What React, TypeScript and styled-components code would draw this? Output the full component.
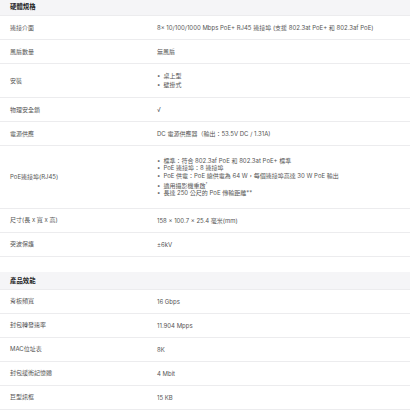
import styled, { createGlobalStyle } from 'styled-components'

const GlobalStyle = createGlobalStyle`
  body {
    margin: 0;
    background: #fff;
    font-family: Inter, "Noto Sans CJK TC", sans-serif;
    -webkit-font-smoothing: antialiased;
  }
`

type Spec = { label: string; value?: string; lists?: string[][]; lh?: number }

const hardware: Spec[] = [
  { label: '連接介面', value: '8× 10/100/1000 Mbps PoE+ RJ45 連接埠 (支援 802.3at PoE+ 和 802.3af PoE)' },
  { label: '風扇數量', value: '無風扇' },
  { label: '安裝', lists: [['桌上型', '壁掛式']], lh: 8.6 },
  { label: '物理安全鎖', value: '√' },
  { label: '電源供應', value: 'DC 電源供應器（輸出：53.5V DC / 1.31A)' },
  {
    label: 'PoE連接埠(RJ45)',
    lists: [
      ['標準：符合 802.3af PoE 和 802.3at PoE+ 標準', 'PoE 連接埠：8 連接埠', 'PoE 供電：PoE 總供電為 64 W，每個連接埠高達 30 W PoE 輸出'],
      ['適用攝影機重啟†', '長達 250 公尺的 PoE 傳輸距離**'],
    ],
    lh: 7.3,
  },
  { label: '尺寸(長 x 寬 x 高)', value: '158 × 100.7 × 25.4 毫米(mm)' },
  { label: '突波保護', value: '±6kV' },
]

const performance: Spec[] = [
  { label: '背板頻寬', value: '16 Gbps' },
  { label: '封包轉發速率', value: '11.904 Mpps' },
  { label: 'MAC位址表', value: '8K' },
  { label: '封包緩衝記憶體', value: '4 Mbit' },
  { label: '巨型訊框', value: '15 KB' },
]

const App = () => {
  return (
    <Page>
      <GlobalStyle />
      <Section>
        <Header>硬體規格</Header>
        {hardware.map((s) => (
          <SpecRow key={s.label} spec={s} />
        ))}
      </Section>
      <Section>
        <Header>產品效能</Header>
        {performance.map((s) => (
          <SpecRow key={s.label} spec={s} />
        ))}
      </Section>
    </Page>
  )
}

const SpecRow = ({ spec }: { spec: Spec }) => (
  <Row $tall={(spec.lists?.flat().length ?? 0) > 2}>
    <Label>{spec.label}</Label>
    <Value>
      {spec.value}
      {spec.lists?.map((list, i) => (
        <List key={i} $lh={spec.lh ?? 8}>
          {list.map((item) => {
            const dagger = item.endsWith('†')
            return (
              <li key={item}>
                {dagger ? item.slice(0, -1) : item}
                {dagger && <sup>†</sup>}
              </li>
            )
          })}
        </List>
      ))}
    </Value>
  </Row>
)

export default App

const Page = styled.div`
  width: 410px;
  margin-top: -2px;
  display: flex;
  flex-direction: column;
  gap: 15px;
`

const Section = styled.div`
  display: flex;
  flex-direction: column;
`

const Header = styled.div`
  background: #f5f5f7;
  height: 18px;
  box-sizing: border-box;
  display: flex;
  align-items: center;
  padding-left: 10px;
  font-size: 6.4px;
  font-weight: 700;
  color: #1d1d1f;
  border-bottom: 1px solid #ececee;
`

const Row = styled.div<{ $tall: boolean }>`
  display: grid;
  grid-template-columns: 147px 1fr;
  align-items: center;
  min-height: 24px;
  padding: ${(p) => (p.$tall ? '3px' : '0')} 10px;
  box-sizing: border-box;
  border-bottom: 1px solid #ececee;
  font-size: 6px;
  color: #555;
`

const Label = styled.div`
  line-height: 8px;
`

const Value = styled.div`
  line-height: 7px;
  display: flex;
  flex-direction: column;
  gap: 3px;
  padding: 8px 0;
`

const List = styled.ul<{ $lh: number }>`
  margin: 0;
  padding: 0;
  list-style: none;
  line-height: ${(p) => p.$lh}px;

  li::before {
    content: '•';
    margin-right: 3px;
  }

  sup {
    font-size: 4px;
    line-height: 0;
  }
`
